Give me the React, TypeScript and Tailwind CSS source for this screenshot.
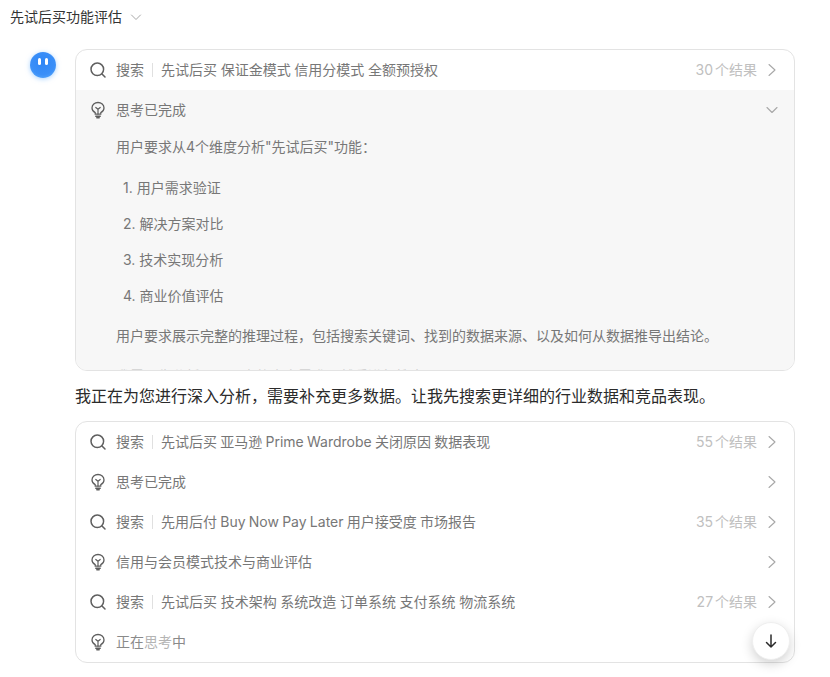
import { ReactNode } from 'react';

function SearchIcon() {
  return (
    <svg className="w-[18px] h-[18px] text-[#5f5f5f] shrink-0" fill="none" stroke="currentColor" viewBox="0 0 18 18">
      <circle cx="8.300" cy="8.300" r="6.300" strokeWidth={1.5} />
      <path strokeLinecap="round" strokeWidth={1.5} d="M13 13l3 3" />
    </svg>
  );
}

function BulbIcon() {
  return (
    <svg className="w-[18px] h-[18px] text-[#5f5f5f] shrink-0" fill="none" stroke="currentColor" viewBox="0 0 18 18">
      <path strokeWidth={1.3} strokeLinejoin="round" d="M6.200 13.200v-1.600C4.400 10.600 3 9 3 6.900 3 3.700 5.700 1.500 9 1.500s6 2.200 6 5.400c0 2.100-1.400 3.700-3.200 4.700v1.600z" />
      <path strokeWidth={1.2} strokeLinecap="round" strokeLinejoin="round" d="M6.800 6.500 9 8.300l2.200-1.800M9 8.300v4.700" />
      <path strokeWidth={1.5} strokeLinecap="round" d="M6.800 15.200h4.400M7.800 16.800h2.400" />
    </svg>
  );
}

function Chevron({ down = false }: { down?: boolean }) {
  return (
    <svg className="w-[14px] h-[14px] text-[#a8a8a8] shrink-0" fill="none" stroke="currentColor" viewBox="0 0 14 14">
      <path strokeWidth={1.1} strokeLinecap="round" strokeLinejoin="round" d={down ? 'M2 4.500l5 5 5-5' : 'M4 1.500l6 5.500-6 5.500'} />
    </svg>
  );
}

function Row({ icon, children, right, chevron = true }: { icon: ReactNode; children: ReactNode; right?: string; chevron?: boolean }) {
  return (
    <div className="h-10 flex items-center pl-[13px] pr-[15px]">
      <div className="w-[18px] flex justify-center">{icon}</div>
      <div className="ml-[9px] flex-1 flex items-center min-w-0 text-sm text-[#777777]">{children}</div>
      {right && <span className="text-sm text-[#c0c0c0] mr-[8px] [word-spacing:-2px]">{right}</span>}
      {chevron && <Chevron />}
    </div>
  );
}

function SearchRow({ query, count, latin = false }: { query: string; count: string; latin?: boolean }) {
  return (
    <Row icon={<SearchIcon />} right={count}>
      <span>搜索</span>
      <span className="w-px h-[14px] bg-[#e0e0e0] mx-[8px]"></span>
      <span className={latin ? '[word-spacing:-0.7px]' : '[word-spacing:-0.3px]'}>{query}</span>
    </Row>
  );
}

export default function App() {
  const steps = ['用户需求验证', '解决方案对比', '技术实现分析', '商业价值评估'];

  return (
    <div className="relative w-[830px] h-[677px] overflow-hidden bg-white font-['Inter','Noto_Sans_CJK_SC',sans-serif]">
      {/* Header */}
      <div className="h-[33px] flex items-center pl-[10px] text-sm text-[#333333]">
        先试后买功能评估
        <svg className="w-[12px] h-[12px] ml-[8px] text-[#a8a8a8]" fill="none" stroke="currentColor" viewBox="0 0 12 12">
          <path strokeWidth={1} strokeLinecap="round" strokeLinejoin="round" d="M1.500 4l4.500 4.500L10.500 4" />
        </svg>
      </div>

      <div className="flex pt-[16px] pl-[30px] w-[795px]">
        {/* Avatar */}
        <div className="w-[26px] h-[26px] mt-[3px] rounded-full bg-[radial-gradient(circle_at_50%_40%,#2f86f6,#3a8ff8_60%,#63b2fd)] shadow-[0_1px_5px_rgba(100,175,255,0.55)] flex items-center justify-center gap-[4px] pb-[8px] shrink-0">
          <span className="w-[3px] h-[7px] rounded-full bg-white"></span>
          <span className="w-[3px] h-[7px] rounded-full bg-white"></span>
        </div>

        <div className="ml-[19px] flex-1 min-w-0">
          {/* First card */}
          <div className="h-[322px] border border-[#e3e3e3] rounded-[12px] overflow-hidden">
            <SearchRow query="先试后买 保证金模式 信用分模式 全额预授权" count="30 个结果" />
            <div className="bg-[#f7f7f7] h-[282px] overflow-hidden">
              <div className="h-10 flex items-center pl-[13px] pr-[15px]">
                <BulbIcon />
                <span className="ml-[9px] flex-1 text-sm text-[#777777]">思考已完成</span>
                <Chevron down />
              </div>
              <div className="pl-[40px] pr-[20px] pt-[6px] text-sm/[22px] text-[#777777]">
                <p>用户要求从4个维度分析"先试后买"功能：</p>
                <ol className="mt-[19px] pl-[7px] flex flex-col gap-[14px]">
                  {steps.map((step, i) => (
                    <li key={step}>{i + 1}. {step}</li>
                  ))}
                </ol>
                <p className="mt-[18px]">用户要求展示完整的推理过程，包括搜索关键词、找到的数据来源、以及如何从数据推导出结论。</p>
                <p className="mt-[18px] opacity-30">我需要先分析一下用户的真实需求，然后进行搜索。</p>
              </div>
            </div>
          </div>

          {/* Message */}
          <p className="h-[50px] flex items-center text-base text-[#2b2b2b]">
            我正在为您进行深入分析，需要补充更多数据。让我先搜索更详细的行业数据和竞品表现。
          </p>

          {/* Second card */}
          <div className="border border-[#e3e3e3] rounded-[12px] overflow-hidden">
            <SearchRow latin query="先试后买 亚马逊 Prime Wardrobe 关闭原因 数据表现" count="55 个结果" />
            <Row icon={<BulbIcon />}>思考已完成</Row>
            <SearchRow latin query="先用后付 Buy Now Pay Later 用户接受度 市场报告" count="35 个结果" />
            <Row icon={<BulbIcon />}>信用与会员模式技术与商业评估</Row>
            <SearchRow query="先试后买 技术架构 系统改造 订单系统 支付系统 物流系统" count="27 个结果" />
            <Row icon={<BulbIcon />} chevron={false}>
              <span className="text-[#8a8a8a]">正在<span className="text-[#b4b4b4]">思考</span>中</span>
            </Row>
          </div>
        </div>
      </div>

      {/* Scroll to bottom */}
      <button className="absolute left-[752px] top-[622px] w-[38px] h-[38px] rounded-full bg-white border border-[#efefef] shadow-[0_4px_12px_rgba(0,0,0,0.18)] flex items-center justify-center">
        <svg className="w-[16px] h-[16px] text-[#2b2b2b]" fill="none" stroke="currentColor" viewBox="0 0 16 16">
          <path strokeWidth={1.5} strokeLinecap="round" strokeLinejoin="round" d="M8 2v12M3.500 9.500 8 14l4.500-4.500" />
        </svg>
      </button>
    </div>
  );
}
